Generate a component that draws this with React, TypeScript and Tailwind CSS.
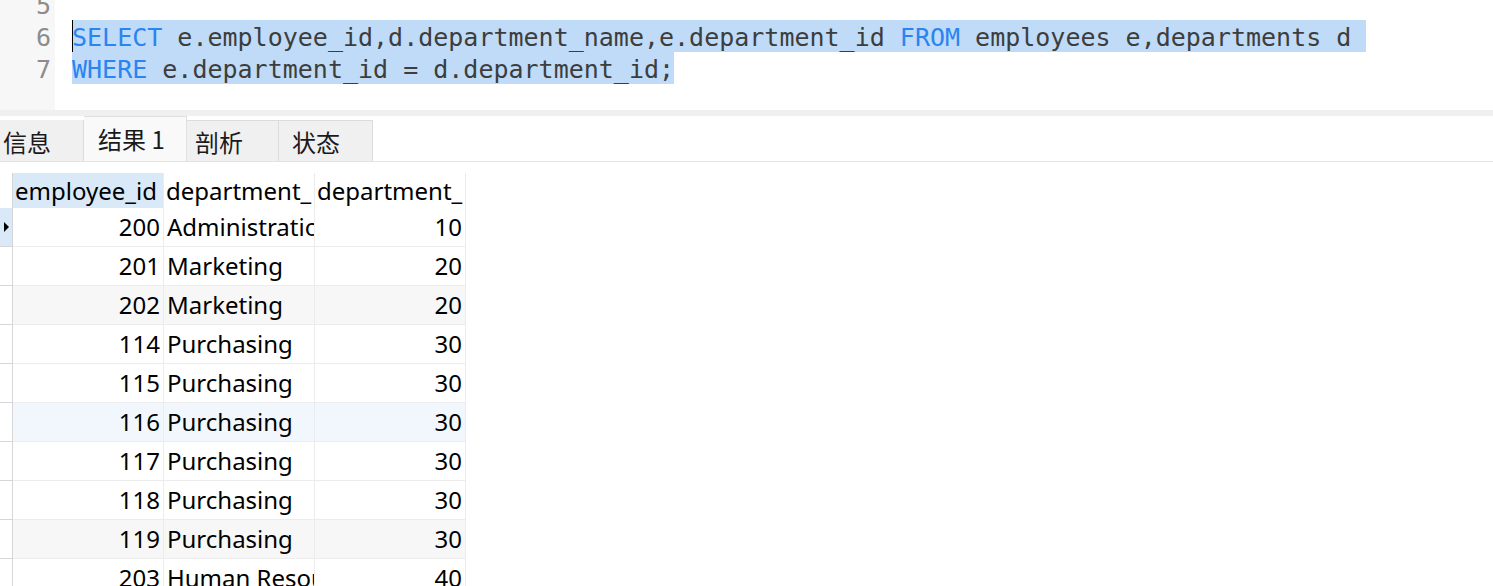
import React from "react";

const mono = { fontFamily: '"DejaVu Sans Mono", "Liberation Mono", monospace' };
const ui = { fontFamily: '"Noto Sans", "Noto Sans CJK SC", sans-serif' };
const cjk = { fontFamily: '"Noto Sans CJK SC", "Noto Sans", sans-serif' };

const rows: { id: number; name: string; dept: number; bg: string }[] = [
  { id: 200, name: "Administration", dept: 10, bg: "bg-white" },
  { id: 201, name: "Marketing", dept: 20, bg: "bg-white" },
  { id: 202, name: "Marketing", dept: 20, bg: "bg-[#f7f7f7]" },
  { id: 114, name: "Purchasing", dept: 30, bg: "bg-white" },
  { id: 115, name: "Purchasing", dept: 30, bg: "bg-white" },
  { id: 116, name: "Purchasing", dept: 30, bg: "bg-[#f2f7fd]" },
  { id: 117, name: "Purchasing", dept: 30, bg: "bg-white" },
  { id: 118, name: "Purchasing", dept: 30, bg: "bg-white" },
  { id: 119, name: "Purchasing", dept: 30, bg: "bg-[#f7f7f7]" },
  { id: 203, name: "Human Resources", dept: 40, bg: "bg-white" },
];

function K({ children }: { children: React.ReactNode }) {
  return <span className="text-[#2a84f2]">{children}</span>;
}

export default function App() {
  return (
    <div className="w-[1493px] h-[586px] bg-white overflow-hidden">
      {/* Editor */}
      <div className="h-[110px] overflow-hidden flex">
        <div
          className="w-[55px] bg-[#f7f7f7] text-[#8c8c8c] text-[25px] leading-[28px] text-right pr-[4px] -mt-[12px]"
          style={mono}
        >
          <div className="h-[32px] pt-[4px]">5</div>
          <div className="h-[32px] pt-[4px]">6</div>
          <div className="h-[32px] pt-[4px]">7</div>
        </div>
        <div
          className="flex-1 pl-[17px] -mt-[12px] text-[25px] leading-[28px] text-[#3d3d3d] whitespace-pre"
          style={mono}
        >
          <div className="h-[32px]"></div>
          <div className="h-[32px]">
            <span className="relative inline-block h-[32px] pt-[4px] bg-[#bfdbf7]">
              <span className="absolute left-0 top-0 w-[1px] h-[32px] bg-black"></span>
              <K>SELECT</K> e.employee_id,d.department_name,e.department_id <K>FROM</K> employees e,departments d{" "}
            </span>
          </div>
          <div className="h-[32px]">
            <span className="inline-block h-[32px] pt-[4px] bg-[#bfdbf7]">
              <K>WHERE</K> e.department_id = d.department_id;
            </span>
          </div>
        </div>
      </div>

      {/* separator */}
      <div className="h-[6px] bg-[#f0f0f0]"></div>

      {/* tabs */}
      <div className="h-[46px] flex items-end border-b border-[#e3e3e3] text-[24px] text-[#1a1a1a]" style={cjk}>
        <div className="w-[84px] h-[41px] bg-[#f0f0f0] border-r border-[#dcdcdc] flex items-center pl-[3px] pt-[2px] leading-none">
          信息
        </div>
        <div className="w-[103px] h-[45px] bg-[#f9f9f9] border-t border-r border-[#e0e0e0] flex items-center pl-[14px] pb-[1px] leading-none">
          结果 1
        </div>
        <div className="w-[92px] h-[41px] bg-[#f0f0f0] border-t border-r border-[#dcdcdc] flex items-center pl-[8px] pt-[2px] leading-none">
          剖析
        </div>
        <div className="w-[94px] h-[41px] bg-[#f0f0f0] border-t border-r border-[#dcdcdc] flex items-center pl-[13px] pt-[2px] leading-none">
          状态
        </div>
      </div>

      {/* grid */}
      <div className="mt-[11px] w-fit text-[24px] text-black" style={ui}>
        <div className="flex h-[35px]">
          <div className="w-[13px] border-r border-[#d6d6d6]"></div>
          <div className="w-[151px] bg-[#d9e9f8] border-r border-[#ebebeb] pl-[2px] flex items-center whitespace-nowrap overflow-hidden leading-none">
            employee_id
          </div>
          <div className="w-[151px] border-r border-[#ebebeb] pl-[2px] flex items-center whitespace-nowrap overflow-hidden leading-none">
            department_
          </div>
          <div className="w-[151px] border-r border-[#ebebeb] pl-[2px] flex items-center whitespace-nowrap overflow-hidden leading-none">
            department_
          </div>
        </div>
        {rows.map((r, i) => (
          <div key={i} className={`flex h-[39px] ${r.bg}`}>
            <div
              className={`w-[13px] border-r border-b border-[#d6d6d6] flex items-center ${
                i === 0 ? "bg-[#d9e9f8]" : "bg-white"
              }`}
            >
              {i === 0 && (
                <svg width="6" height="10" viewBox="0 0 6 10" className="ml-[4px]">
                  <path d="M0 0 L5 5 L0 10 Z" fill="#000" />
                </svg>
              )}
            </div>
            <div className="w-[151px] border-r border-b border-[#ececec] pr-[3px] flex items-center justify-end leading-none">
              {r.id}
            </div>
            <div className="w-[151px] border-r border-b border-[#ececec] pl-[3px] flex items-center whitespace-nowrap overflow-hidden leading-none">
              {r.name}
            </div>
            <div className="w-[151px] border-r border-b border-[#ececec] pr-[3px] flex items-center justify-end leading-none">
              {r.dept}
            </div>
          </div>
        ))}
      </div>
    </div>
  );
}
